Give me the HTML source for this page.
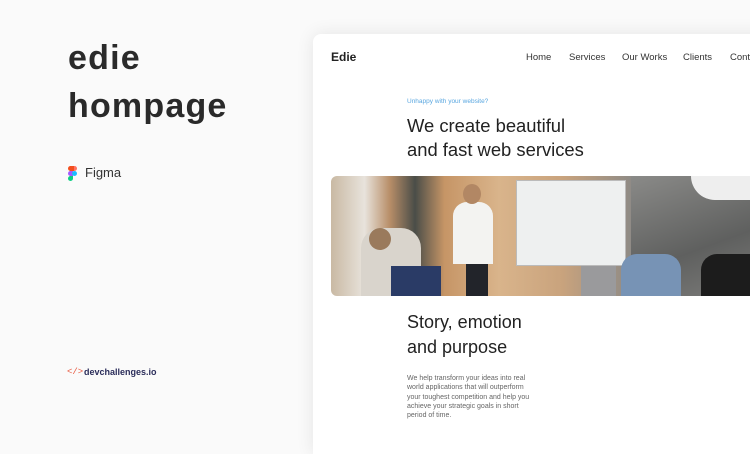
<!DOCTYPE html>
<html><head><meta charset="utf-8"><style>
*{margin:0;padding:0;box-sizing:border-box}
body{width:750px;height:424px;overflow:hidden;background:#fafafa;font-family:"Liberation Sans",sans-serif;position:relative}
.t{position:absolute;left:68px;font-weight:bold;font-size:34px;color:#2a2a2a;letter-spacing:1.2px}
.card{position:absolute;left:313px;top:34px;width:460px;height:420px;background:#fff;border-radius:8px 0 0 0;box-shadow:0 0 18px rgba(0,0,0,.09)}
.a{position:absolute;white-space:nowrap}
.nav{font-size:9.5px;color:#333;top:52px}
.photo{position:absolute;left:18px;top:142px;width:420px;height:120px;border-radius:6px 0 0 6px;overflow:hidden;background:linear-gradient(90deg,#c9b9a3 0%,#e8e3dc 8%,#b88e68 14%,#4a4d48 20%,#c69566 27%,#d9b48b 40%,#c9a37d 55%,#8d8a86 72%,#6c6d6c 85%,#9a9a98 100%)}
.photo div{position:absolute}
</style></head><body>
<div class="t" style="top:39px">edie</div>
<div class="t" style="top:87px">hompage</div>
<svg style="position:absolute;left:68px;top:166px" width="9" height="15" viewBox="0 0 9 15">
<rect x="0" y="0" width="5" height="5" rx="2.5" fill="#f24e1e"/><rect x="4" y="0" width="5" height="5" rx="2.5" fill="#ff7262"/><rect x="2" y="0" width="4" height="5" fill="#f24e1e"/>
<rect x="0" y="5" width="5" height="5" rx="2.5" fill="#a259ff"/><rect x="2" y="5" width="3" height="5" fill="#a259ff"/><circle cx="6.5" cy="7.5" r="2.5" fill="#1abcfe"/>
<rect x="0" y="10" width="5" height="5" rx="2.5" fill="#0acf83"/><rect x="2" y="10" width="3" height="3" fill="#0acf83"/></svg>
<div class="a" style="left:85px;top:165px;font-size:13px;color:#333">Figma</div>
<div class="a" style="left:67px;top:367px;font-size:9px;color:#e8583f;font-family:'Liberation Mono',monospace">&lt;/&gt;</div>
<div class="a" style="left:84px;top:367px;font-size:9px;color:#2b2d5a;font-weight:bold">devchallenges.io</div>
<div class="card">
<div class="a" style="left:18px;top:16px;font-size:12px;font-weight:bold;color:#222">Edie</div>
<div class="a nav" style="left:213px;top:18px">Home</div>
<div class="a nav" style="left:256px;top:18px">Services</div>
<div class="a nav" style="left:309px;top:18px">Our Works</div>
<div class="a nav" style="left:370px;top:18px">Clients</div>
<div class="a nav" style="left:417px;top:18px">Contact</div>
<div class="a" style="left:94px;top:64px;font-size:6.5px;color:#5aa7e0">Unhappy with your website?</div>
<div class="a" style="left:94px;top:80px;font-size:18.4px;line-height:24px;color:#222">We create beautiful<br>and fast web services</div>
<div class="photo">
<div style="left:185px;top:4px;width:110px;height:86px;background:#eef0f0;border:1px solid #bbb"></div>
<div style="left:300px;top:0;width:120px;height:120px;background:linear-gradient(160deg,#8a8a88,#5f605f 60%,#7b7b79)"></div>
<div style="left:360px;top:0;width:60px;height:24px;background:#eee;border-radius:0 0 0 30px"></div>
<div style="left:30px;top:52px;width:60px;height:68px;background:#d9d4cc;border-radius:20px 20px 0 0"></div>
<div style="left:38px;top:52px;width:22px;height:22px;background:#9a7a5c;border-radius:50%"></div>
<div style="left:122px;top:26px;width:40px;height:62px;background:#f3f3f1;border-radius:14px 14px 0 0"></div>
<div style="left:135px;top:88px;width:22px;height:32px;background:#22242a"></div>
<div style="left:132px;top:8px;width:18px;height:20px;background:#b28764;border-radius:50%"></div>
<div style="left:290px;top:78px;width:60px;height:42px;background:#7793b5;border-radius:16px 16px 0 0"></div>
<div style="left:370px;top:78px;width:50px;height:42px;background:#1c1c1c;border-radius:16px 0 0 0"></div>
<div style="left:250px;top:90px;width:35px;height:30px;background:#9a9a9c"></div>
<div style="left:60px;top:90px;width:50px;height:30px;background:#2a3b66"></div>
</div>
<div class="a" style="left:94px;top:276px;font-size:18px;line-height:25px;color:#222">Story, emotion<br>and purpose</div>
<div class="a" style="left:94px;top:340px;font-size:7px;line-height:9.3px;color:#666">We help transform your ideas into real<br>world applications that will outperform<br>your toughest competition and help you<br>achieve your strategic goals in short<br>period of time.</div>
</div>
</body></html>
